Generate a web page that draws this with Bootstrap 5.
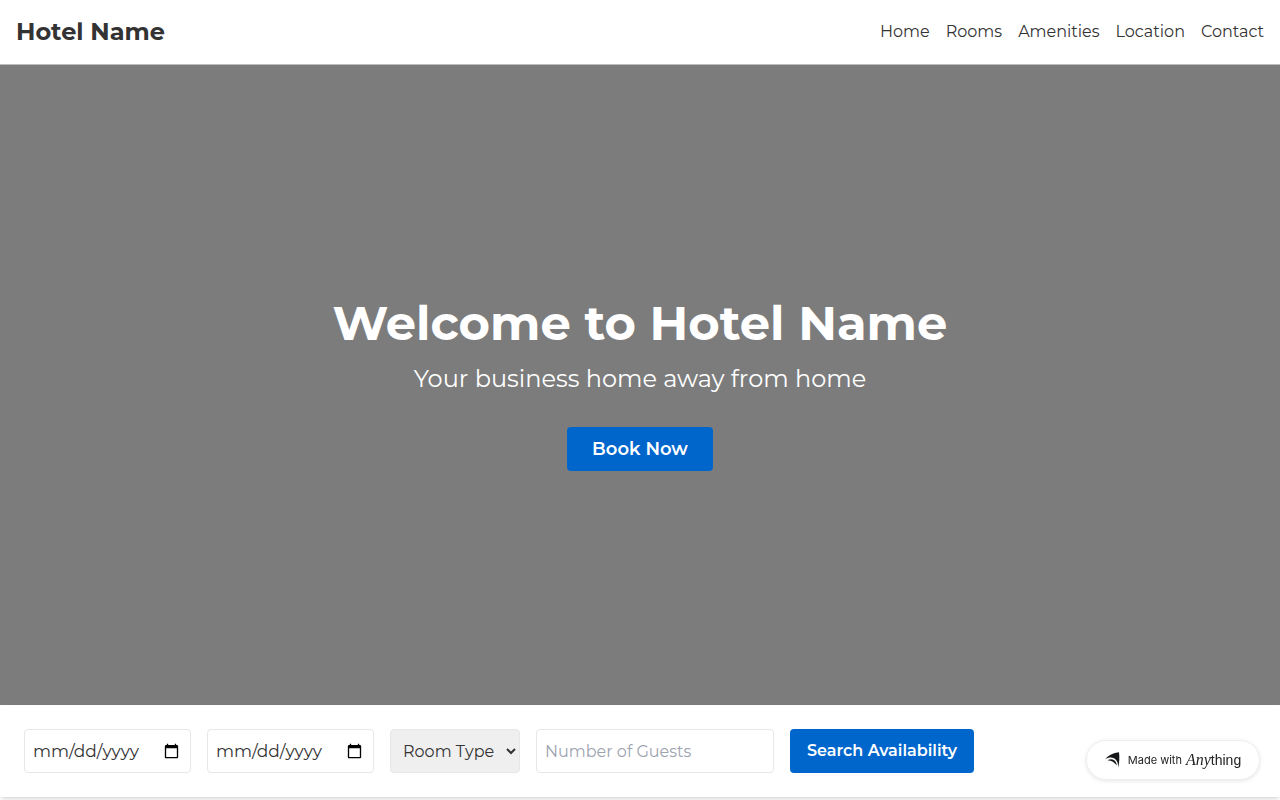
<!DOCTYPE html>
<html lang="en">
<head>
<meta charset="utf-8">
<meta name="viewport" content="width=device-width, initial-scale=1">
<title>Hotel Name</title>
<link href="https://cdn.jsdelivr.net/npm/bootstrap@5.3.0/dist/css/bootstrap.min.css" rel="stylesheet">
<style>
  body { font-family: Montserrat, Inter, sans-serif; font-size: 16px; line-height: 24px; color: #333; }
  .site-header { border-bottom: 1px solid #bebebe; }
  .site-header a { color: #333; text-decoration: none; }
  .brand-name { font-size: 24px; line-height: 32px; font-weight: 700; }
  .hero { height: 80vh; background: #7c7c7c; }
  .hero h1 { font-size: 48px; line-height: 48px; font-weight: 700; }
  .hero p { font-size: 24px; line-height: 32px; }
  .btn-hotel { --bs-btn-color: #fff; --bs-btn-bg: #0066cc; --bs-btn-hover-color: #fff; --bs-btn-hover-bg: #0052a3; --bs-btn-border-width: 0; --bs-btn-border-radius: 4px; height: 44px; font-weight: 600; }
  .btn-book { --bs-btn-padding-x: 25px; --bs-btn-font-size: 18px; }
  .btn-search { --bs-btn-padding-x: 17px; --bs-btn-font-size: 16px; }
  .search-bar { box-shadow: 0 4px 6px -1px rgba(0,0,0,.1), 0 2px 4px -2px rgba(0,0,0,.1); }
  .field { height: 44px; padding: 8px; border: 1px solid #e5e7eb; border-radius: 4px; color: #333; background: #fff; }
  .field::placeholder { color: #9ca3af; opacity: 1; }
  .field-date { width: 167px; font-size: 17px; }
  .field-room { width: 130px; background: #efefef; }
  .field-guests { width: 238px; }
  .made-with { right: 20px; bottom: 20px; width: 174px; height: 40px; background: #fff; color: #222; border: 1px solid #eee; box-shadow: 0 1px 4px rgba(0,0,0,.1); font: 11px/16px Inter, sans-serif; text-decoration: none; }
  .mark-serif { font: italic 16px/20px "Liberation Serif", serif; }
  .mark-sans { font: 14px/20px "Liberation Sans", sans-serif; }
</style>
</head>
<body class="min-vh-100">
<header class="site-header bg-white d-flex justify-content-between align-items-center p-3">
  <a href="#" class="brand-name">Hotel Name</a>
  <nav class="d-flex gap-3" aria-label="Main">
    <a href="#">Home</a>
    <a href="#rooms">Rooms</a>
    <a href="#amenities">Amenities</a>
    <a href="#location">Location</a>
    <a href="#contact">Contact</a>
  </nav>
</header>
<main>
  <section class="hero d-flex flex-column justify-content-center align-items-center text-center text-white">
    <h1 class="mb-3">Welcome to Hotel Name</h1>
    <p class="mb-4 pb-2">Your business home away from home</p>
    <button type="button" class="btn btn-hotel btn-book">Book Now</button>
  </section>
  <form class="search-bar bg-white d-flex flex-wrap gap-3 p-4">
    <input type="date" class="field field-date" aria-label="Check-in date">
    <input type="date" class="field field-date" aria-label="Check-out date">
    <select class="field field-room" aria-label="Room type">
      <option>Room Type</option>
      <option>Single</option>
      <option>Double</option>
      <option>Suite</option>
    </select>
    <input type="number" class="field field-guests" placeholder="Number of Guests" aria-label="Number of guests">
    <button type="submit" class="btn btn-hotel btn-search">Search Availability</button>
  </form>
</main>
<a href="#" class="made-with position-fixed rounded-pill d-flex align-items-center justify-content-center">
  <svg class="me-2" width="15" height="16" viewBox="0 0 15 16" fill="#151719" aria-hidden="true">
    <path d="M0 7.200C3.500 3.500 8 .8 14 .3C14.600 5 14.500 10.500 13.200 15.500C13.200 11.500 12.300 8 9 6.200C6.200 4.800 3 5.500 0 7.200Z"/>
    <path d="M2.500 8.200C5.500 6.500 8.700 7 10.300 9.200C11.200 10.500 11.700 12 11.800 13.500C9.500 10.200 6.800 8.700 2.500 8.200Z"/>
  </svg>
  <span class="me-1">Made with</span>
  <span class="mark-serif">Any</span><span class="mark-sans">thing</span>
</a>
<script src="https://cdn.jsdelivr.net/npm/bootstrap@5.3.0/dist/js/bootstrap.bundle.min.js"></script>
</body>
</html>
